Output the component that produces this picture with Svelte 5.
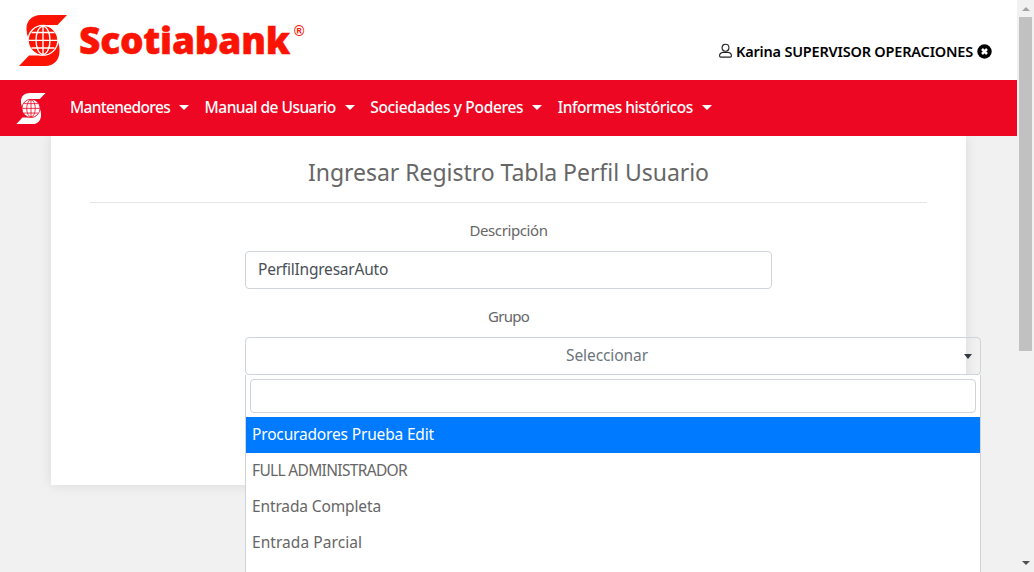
<script>
  const menus = [
    { label: 'Mantenedores', width: 100 },
    { label: 'Manual de Usuario', width: 131 },
    { label: 'Sociedades y Poderes', width: 153 },
    { label: 'Informes históricos', width: 135 }
  ];
  const groups = [
    { label: 'Procuradores Prueba Edit', width: 182 },
    { label: 'FULL ADMINISTRADOR', width: 155 },
    { label: 'Entrada Completa', width: 129 },
    { label: 'Entrada Parcial', width: 110 }
  ];
  let description = $state('PerfilIngresarAuto');
  let search = $state('');
  let active = $state(0);

  // Tracks a label so that it fills the width reserved for it.
  function track(node, width) {
    const natural = node.getBoundingClientRect().width;
    node.style.letterSpacing = `${(width - natural) / node.textContent.length}px`;
  }
</script>

{#snippet emblem(cls, line)}
  <svg class={cls} viewBox="0 0 48 51" fill="currentColor" aria-hidden="true">
    <path d="M48 0H22C12 0 7.500 7 7.500 13C7.500 17 8 20 9.500 23C11 15 17 10 25 10H38.500Z" />
    <path d="M0 51H26C36 51 40.500 44 40.500 36C40.500 32 40 28 38 25C38.500 34 32 40.500 24 40.500H10Z" />
    <circle cx="24" cy="25.300" r="14.900" stroke={line} stroke-width="1.300" />
    <g fill="none" stroke={line} stroke-width="1.350">
      <ellipse cx="24" cy="25.300" rx="7" ry="14" />
      <path d="M24 11V39.500M12.500 17.500H35.500M9.500 25.300H38.500M12.500 33H35.500" />
    </g>
  </svg>
{/snippet}

<div class="window">
  <div class="page">
    <header>
      <div class="brand">
        {@render emblem('big', '#fff')}
        <span class="name"><span use:track={211}>Scotiabank</span></span><span class="reg">®</span>
      </div>
      <div class="user">
        <svg width="13" height="16" viewBox="0 0 14 16" fill="none" stroke="#222" stroke-width="1.200" aria-hidden="true">
          <circle cx="7" cy="4.500" r="3.700" />
          <path d="M4.300 9.500H9.700Q13.400 10 13.400 13.200Q13.400 14.600 12 14.600H2Q.6 14.600 .6 13.200Q.6 10 4.300 9.500Z" />
        </svg>
        <b><span use:track={237}>Karina SUPERVISOR OPERACIONES</span></b>
        <svg width="15" height="15" viewBox="0 0 15 15" aria-hidden="true">
          <circle cx="7.500" cy="7.500" r="7.200" />
          <path d="M5 5L10 10M10 5L5 10" stroke="#fff" stroke-width="2.500" />
        </svg>
      </div>
    </header>
    <nav>
      {@render emblem('small', '#ed0722')}
      {#each menus as menu}
        <a href="#menu"><span use:track={menu.width}>{menu.label}</span><i></i></a>
      {/each}
    </nav>
    <main>
      <section class="card">
        <h1><span use:track={401}>Ingresar Registro Tabla Perfil Usuario</span></h1>
        <hr />
        <div class="form">
          <label for="description"><span use:track={78}>Descripción</span></label>
          <input id="description" class="control" bind:value={description} />
          <label for="group"><span use:track={41}>Grupo</span></label>
          <div class="select">
            <button id="group" type="button"><span use:track={82}>Seleccionar</span><i></i></button>
            <div class="dropdown">
              <input aria-label="Grupo" bind:value={search} />
              <ul>
                {#each groups as group, index}
                  <li class:active={active === index} onmouseenter={() => (active = index)}><span use:track={group.width}>{group.label}</span></li>
                {/each}
              </ul>
            </div>
          </div>
        </div>
      </section>
    </main>
  </div>
  <div class="scrollbar"><i class="up"></i><div class="thumb"></div><i class="down"></i></div>
</div>

<style>
  :global(body) { margin: 0; overflow: hidden; }
  * { box-sizing: border-box; }
  .window { display: grid; grid-template-columns: 1017px 17px; height: 572px; overflow: hidden; font: 15.5px/24px "Noto Sans", "Open Sans", sans-serif; color: #666; background: #f1f1f1; }
  span { display: inline-block; white-space: nowrap; }
  .page { display: flex; flex-direction: column; height: 572px; }
  header { height: 80px; flex: none; display: flex; justify-content: space-between; background: #fff; padding: 15px 25px 0 19px; }
  .brand { display: flex; color: #fb1404; }
  .big { width: 48px; height: 51px; }
  .name { margin-left: 12px; padding-top: 3px; font: 800 37px/44px "Open Sans", sans-serif; width: 211px; -webkit-text-stroke: .5px currentColor; }
  .reg { font: bold 14px/16px "Liberation Sans", sans-serif; margin: 8px 0 0 4px; }
  .user { display: flex; align-items: center; height: 24px; margin-top: 24px; color: #000; }
  .user b { font-size: 14.5px; font-weight: 600; margin: 0 4px; width: 237px; }
  nav { height: 56px; flex: none; display: flex; align-items: center; background: #ed0722; padding-left: 16px; color: #fff; z-index: 1; }
  .small { width: 30px; height: 31px; margin-right: 24px; }
  nav a { display: flex; align-items: center; color: #fff; text-decoration: none; margin-right: 15.6px; font-weight: 500; height: 24px; }
  nav a span { margin-top: -2px; }
  nav i { border: 5px solid transparent; border-top-color: #fff; border-bottom: 0; margin-left: 9px; margin-top: -2px; }
  main { flex: 1; background: #f1f1f1; padding-left: 51px; }
  .card { width: 915px; height: 349px; padding: 20px 39px 0; background: #fff; box-shadow: 0 0 12px rgba(0, 0, 0, .1); }
  h1 { margin: 0; text-align: center; font-weight: 400; font-size: 23px; line-height: 33px; }
  hr { border: 0; border-top: 1px solid #e5e5e5; margin: 13px 0 15px; }
  .form { width: 527px; margin-left: 155px; display: flex; flex-direction: column; }
  label { text-align: center; height: 24px; margin-bottom: 9px; font-size: 15px; }
  input { border: 1px solid #ced4da; border-radius: 4px; font: inherit; color: #495057; outline: 0; background: #fff; }
  .control { height: 38px; width: 527px; padding: 0 12px 2px; margin-bottom: 15px; letter-spacing: -.22px; }
  .select { position: relative; width: 736px; height: 38px; }
  button { width: 736px; height: 38px; display: flex; align-items: center; border: 1px solid #ced4da; border-radius: 4px; background: transparent; font: inherit; color: #6c757d; padding: 0 8px 0 320px; justify-content: space-between; }
  button span { margin-top: -2px; }
  button i { border: 4px solid transparent; border-top: 5px solid #343a40; border-bottom: 0; }
  .dropdown { position: absolute; top: 38px; left: 0; width: 736px; height: 210px; background: #fff; border: 1px solid #ced4da; border-top: 0; padding-top: 4px; }
  .dropdown input { display: block; width: 726px; height: 34px; margin: 0 4px 4px; padding: 0 4px; }
  ul { list-style: none; margin: 0; padding: 0; }
  li { height: 36px; padding: 5px 6px 7px; }
  li.active { background: #007bff; color: #fff; }
  .scrollbar { background: #f1f1f1; display: flex; flex-direction: column; align-items: center; height: 572px; }
  .up { border: 4px solid transparent; border-top: 0; border-bottom: 4px solid #a3a3a3; margin: 7px 0 6px; }
  .thumb { width: 13px; height: 334px; background: #c1c1c1; }
  .down { border: 4px solid transparent; border-top: 4px solid #505050; border-bottom: 0; margin: auto 0 7px; }
</style>
